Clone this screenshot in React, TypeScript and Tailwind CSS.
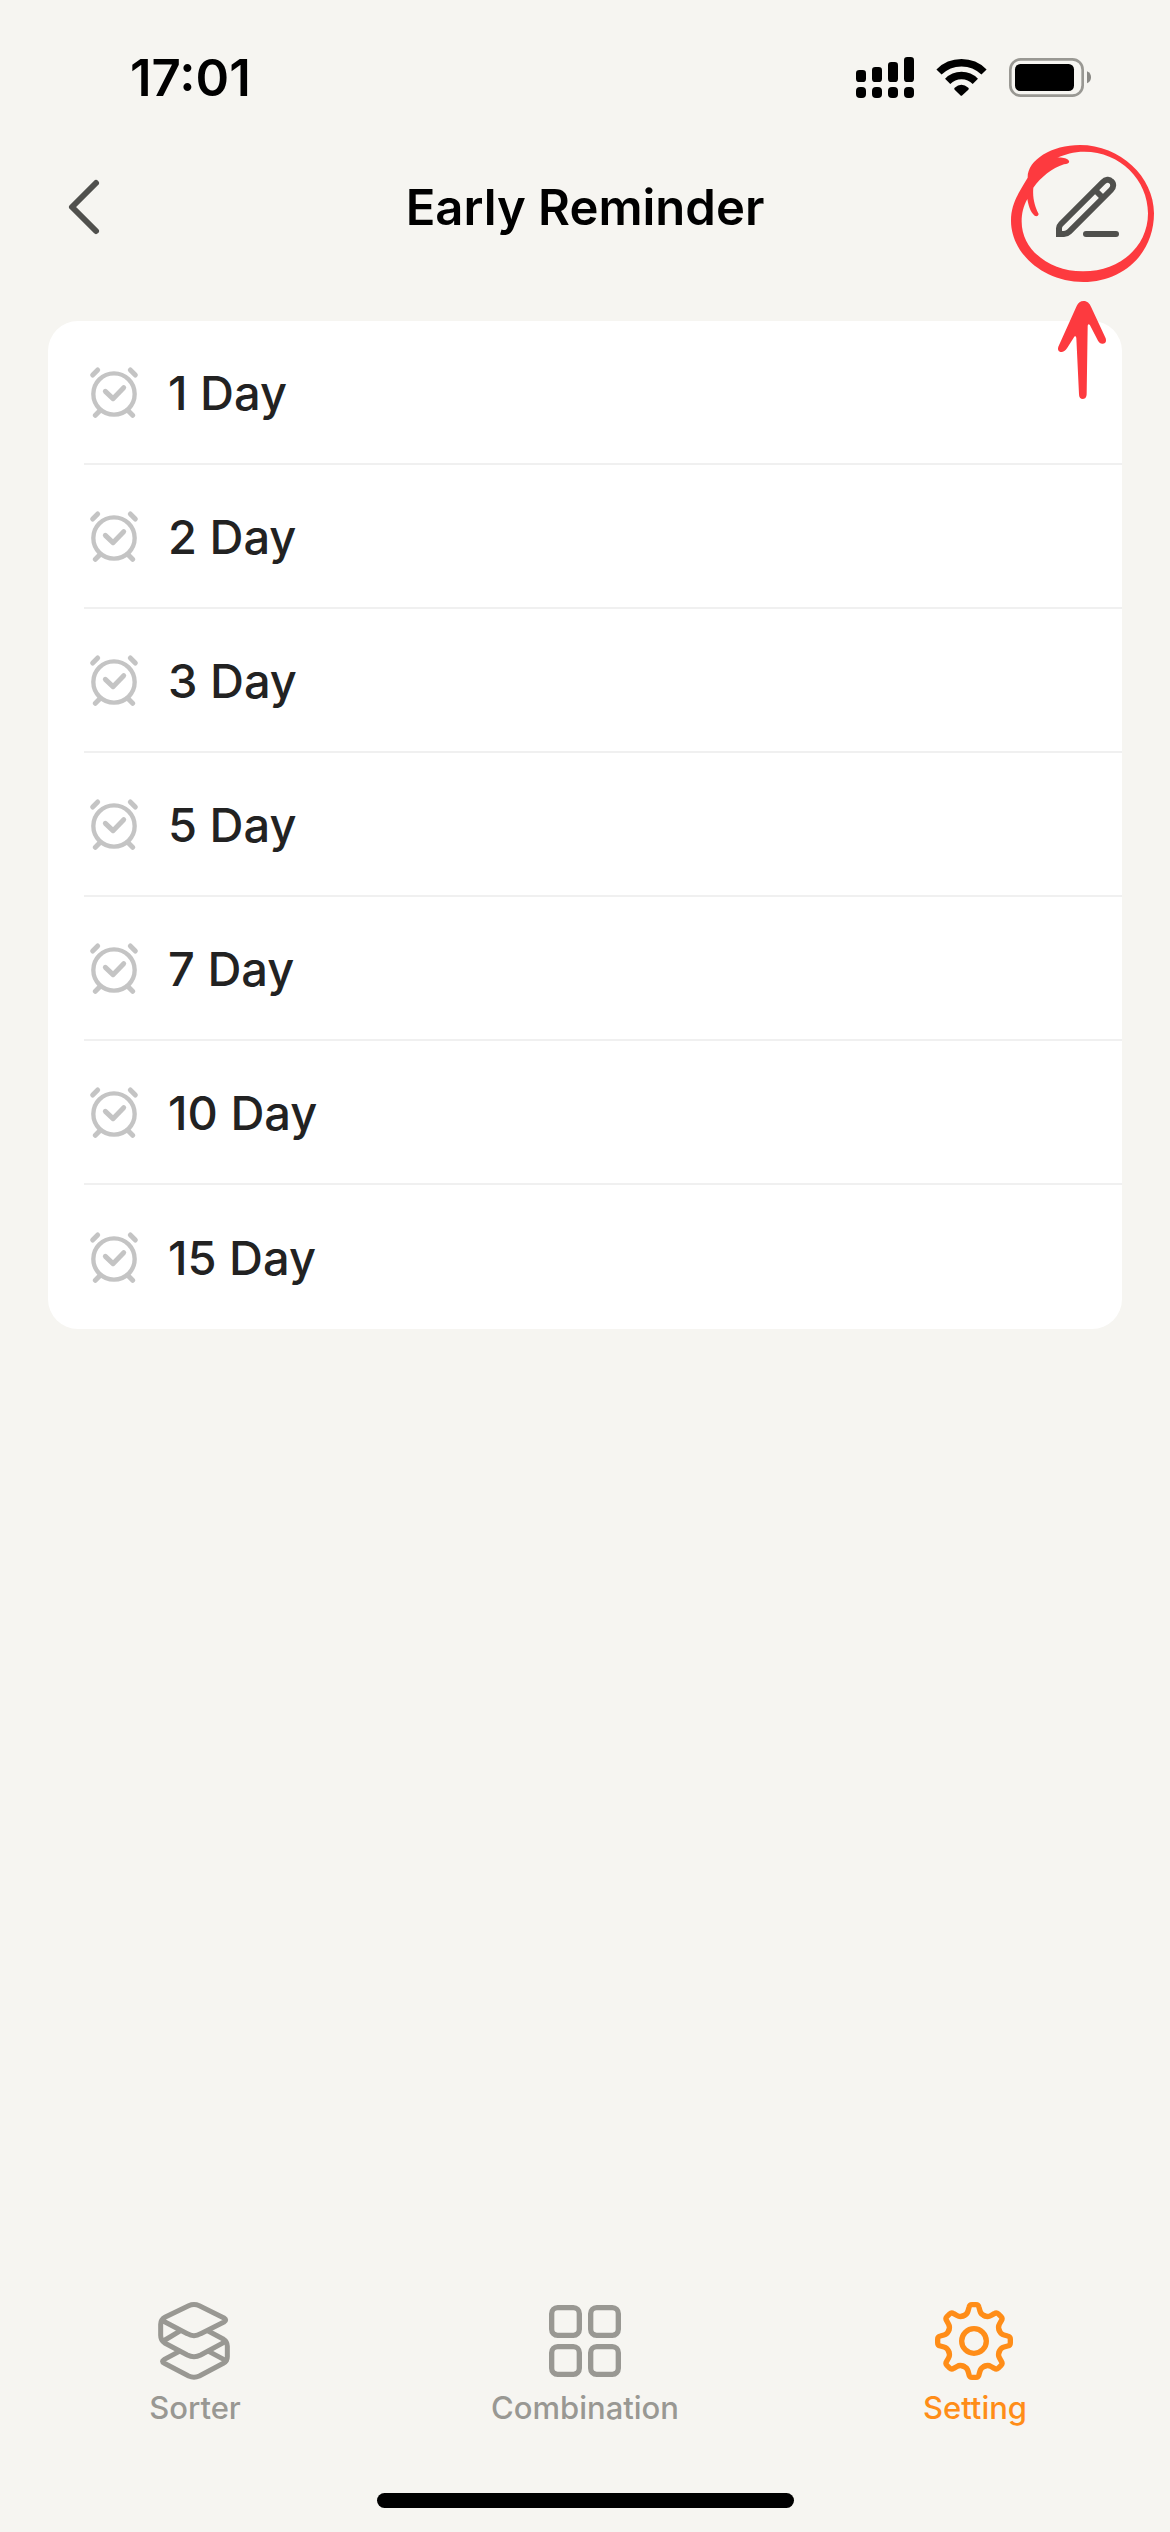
import type { ReactNode } from "react";

const reminders = [1, 2, 3, 5, 7, 10, 15];

const signalBars = [
  { x: 48, y: 90 },
  { x: 96, y: 81 },
  { x: 144, y: 66 },
  { x: 192, y: 51 },
];

const gearAngles = [0, 45, 90, 135, 180, 225, 270, 315];

function SignalIcon() {
  return (
    <svg viewBox="48 45 174 135" className="w-[58px] h-[45px]" aria-hidden="true">
      {signalBars.map((bar) => (
        <g key={bar.x}>
          <rect x={bar.x} y={bar.y} width="30" height={126 - bar.y} rx="10" />
          <rect x={bar.x} y="141" width="30" height="33" rx="12" />
        </g>
      ))}
    </svg>
  );
}

function WifiIcon() {
  return (
    <svg viewBox="288 45 153 135" className="w-[51px] h-[45px]" aria-hidden="true">
      <g fill="none" stroke="#000" strokeWidth="22">
        <path d="M297 96A96 96 0 0 1 432 96" />
        <path d="M323 124A58 58 0 0 1 406 124" />
      </g>
      <path d="M344 149Q341 146 344 143Q364 126 385 143Q388 146 385 149L367 166Q364 169 361 166Z" />
    </svg>
  );
}

function BatteryIcon() {
  return (
    <svg viewBox="507 45 246 135" className="w-[82px] h-[45px]" aria-hidden="true">
      <rect x="511" y="58" width="217" height="109" rx="31" fill="none" stroke="#999893" strokeWidth="8" />
      <rect x="525" y="72" width="177" height="81" rx="16" />
      <path d="M741 94Q753 99 753 112Q753 125 741 130Z" fill="#8a8985" />
    </svg>
  );
}

function BackIcon() {
  return (
    <svg viewBox="-12 27 288 288" className="size-24" fill="none" stroke="#50504d" strokeWidth="18" strokeLinecap="round" strokeLinejoin="round" aria-hidden="true">
      <path d="M168 99L96 171L168 243" />
    </svg>
  );
}

function EditIcon() {
  return (
    <svg viewBox="174 87 288 288" className="size-24" fill="none" stroke="#50504d" strokeWidth="18" aria-hidden="true">
      <path d="M237 312V295Q237 288 243 282L368 157C377 148 388 147 394 154C402 161 401 172 393 180L268 305Q261 312 252 312Z" />
      <path d="M345 180L369 204" />
      <path d="M318 312H408" strokeLinecap="round" />
    </svg>
  );
}

function AlarmIcon() {
  return (
    <svg viewBox="144 169 156 156" className="size-[52px]" fill="none" stroke="#c4c4c4" strokeWidth="15" strokeLinecap="round" strokeLinejoin="round" aria-hidden="true">
      <circle cx="222" cy="253" r="62" strokeWidth="13" />
      <path d="M196 245L219 267L251 234" />
      <path d="M158 196L173 181M271 181L286 196" />
      <path d="M181 302L166 317M263 302L278 317" />
    </svg>
  );
}

function SorterIcon() {
  return (
    <svg viewBox="69 54 252 252" className="size-[84px]" fill="none" stroke="currentColor" strokeWidth="15" strokeLinecap="round" strokeLinejoin="round" aria-hidden="true">
      <path d="M98 119L172 158Q192 170 212 158L282 123Q292 117 282 111L208 74Q192 67 176 74L106 108Q92 116 92 130V163Q92 178 104 186L172 222Q192 232 212 222L286 182" />
      <path d="M100 180L148 151" />
      <path d="M236 151L278 173Q292 182 292 196V227Q292 240 280 247L208 285Q192 292 176 285L103 247Q92 241 103 235L148 211" />
      <path d="M236 211L288 239" />
    </svg>
  );
}

function CombinationIcon() {
  return (
    <svg viewBox="189 54 252 252" className="size-[84px]" fill="none" stroke="currentColor" strokeWidth="16" aria-hidden="true">
      <rect x="215" y="80" width="83" height="83" rx="18" />
      <rect x="332" y="80" width="83" height="83" rx="18" />
      <rect x="215" y="197" width="83" height="83" rx="18" />
      <rect x="332" y="197" width="83" height="83" rx="18" />
    </svg>
  );
}

function SettingIcon() {
  return (
    <svg viewBox="99 54 252 252" className="size-[84px]" fill="none" stroke="currentColor" strokeWidth="16" strokeLinecap="round" aria-hidden="true">
      {gearAngles.map((angle) => (
        <path
          key={angle}
          transform={`rotate(${angle} 222 180)`}
          d="M190.600 104.200C197 101.600 202 98 204 90L207 79C208 74 210 71 216 71H228C234 71 236 74 237 79L240 90C242 98 247 101.600 253.400 104.200"
        />
      ))}
      <circle cx="222" cy="180" r="37" />
    </svg>
  );
}

// Hand-drawn circle and arrow pointing at the edit button
function EditHint() {
  return (
    <svg viewBox="0 0 570 840" className="absolute right-0 top-[130px] w-[190px] h-[280px] pointer-events-none" fill="#fd3a3f" aria-hidden="true">
      <path
        fillRule="evenodd"
        d="M143 143C142 90 215 45 300 45C420 45 522 140 522 250C522 370 430 456 310 456C190 456 93 370 93 272C93 220 118 185 143 143ZM142 207C130 230 125 250 125 275C125 360 210 425 310 424C420 424 504 350 504 250C504 150 420 65 313 65C280 65 255 73 232 83C245 82 262 84 267 93C269 100 262 102 252 103C215 115 185 140 160 173C157 205 165 230 176 252C174 260 168 259 164 257C150 245 145 225 142 207Z"
      />
      <path d="M311 513C322 513 328 520 333 530L377 625C380 635 376 641 369 641C362 642 358 638 354 632L330 586C326 580 323 583 323 590L320 790C320 802 316 807 309 807C301 807 297 802 297 792L289 625C288 617 284 618 281 623L262 653C256 662 250 666 244 666C236 665 232 660 235 650L290 528C295 518 301 513 311 513Z" />
    </svg>
  );
}

function TabButton({ label, active, children }: { label: string; active?: boolean; children: ReactNode }) {
  return (
    <button
      type="button"
      className={`flex flex-1 flex-col items-center gap-1 ${active ? "text-[#ff8d18]" : "text-[#999893]"}`}
    >
      {children}
      <span className="text-[31px] leading-[42px] font-medium">{label}</span>
    </button>
  );
}

export default function App() {
  return (
    <div className="relative flex min-h-screen flex-col bg-[#f6f5f1] font-['Inter',sans-serif]">
      <div className="flex h-[141px] items-center justify-between pt-[14px] pl-[130px] pr-[79px]">
        <span className="text-[51px] leading-none font-semibold">17:01</span>
        <div className="flex items-center gap-[22px]">
          <SignalIcon />
          <WifiIcon />
          <BatteryIcon />
        </div>
      </div>

      <header className="flex h-[132px] items-center justify-between px-9">
        <button type="button" aria-label="Back">
          <BackIcon />
        </button>
        <h1 className="text-[49px] leading-none font-semibold text-black">Early Reminder</h1>
        <button type="button" aria-label="Edit">
          <EditIcon />
        </button>
      </header>

      <main className="flex-1 px-12 pt-12">
        <ul className="rounded-[30px] bg-white pl-9">
          {reminders.map((days) => (
            <li
              key={days}
              className="flex h-36 items-center gap-7 border-b-2 border-[#f0f0f0] pl-1 last:border-b-0"
            >
              <AlarmIcon />
              <span className="text-[47px] leading-none font-medium text-[#222]">{days} Day</span>
            </li>
          ))}
        </ul>
      </main>

      <nav className="flex pb-16">
        <TabButton label="Sorter">
          <SorterIcon />
        </TabButton>
        <TabButton label="Combination">
          <CombinationIcon />
        </TabButton>
        <TabButton label="Setting" active>
          <SettingIcon />
        </TabButton>
      </nav>
      <div className="mx-auto mb-6 h-[15px] w-[417px] rounded-full bg-black" />

      <EditHint />
    </div>
  );
}
